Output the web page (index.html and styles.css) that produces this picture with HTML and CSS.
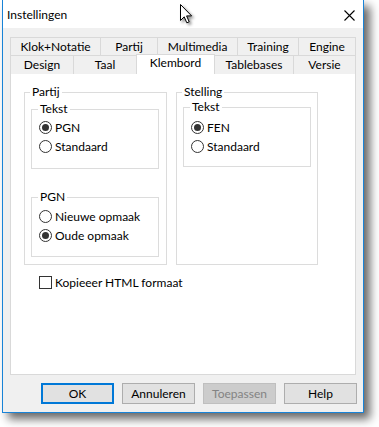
FILE: index.html
```html
<!DOCTYPE html>
<html lang="nl">
<head>
<meta charset="utf-8">
<title>Instellingen</title>
<link rel="stylesheet" href="styles.css">
</head>
<body>
<div class="window">
  <div class="titlebar">
    <span class="title">Instellingen</span>
    <svg class="close" width="11" height="11" viewBox="0 0 11 11"><path d="M0.5 0.5 L10.5 10.5 M10.5 0.5 L0.5 10.5" stroke="#000" stroke-width="1.1" fill="none"/></svg>
  </div>
  <div class="content">
    <div class="tabs">
      <div class="tabrow">
        <div class="tab w-klok">Klok+Notatie</div>
        <div class="tab w-partij">Partij</div>
        <div class="tab w-multi">Multimedia</div>
        <div class="tab w-training">Training</div>
        <div class="tab w-engine">Engine</div>
      </div>
      <div class="tabrow">
        <div class="tab w-design">Design</div>
        <div class="tab w-taal">Taal</div>
        <div class="tab w-klem active">Klembord</div>
        <div class="tab w-table">Tablebases</div>
        <div class="tab w-versie">Versie</div>
      </div>
    </div>
    <div class="panel">
      <div class="groups">
        <fieldset class="group group-partij">
          <legend>Partij</legend>
          <fieldset class="sub sub-first">
            <legend>Tekst</legend>
            <div class="option"><span class="radio checked"></span><span>PGN</span></div>
            <div class="option"><span class="radio"></span><span>Standaard</span></div>
          </fieldset>
          <fieldset class="sub sub-second">
            <legend>PGN</legend>
            <div class="option"><span class="radio"></span><span>Nieuwe opmaak</span></div>
            <div class="option"><span class="radio checked"></span><span>Oude opmaak</span></div>
          </fieldset>
        </fieldset>
        <fieldset class="group group-stelling">
          <legend>Stelling</legend>
          <fieldset class="sub sub-stelling">
            <legend>Tekst</legend>
            <div class="option"><span class="radio checked"></span><span>FEN</span></div>
            <div class="option"><span class="radio"></span><span>Standaard</span></div>
          </fieldset>
        </fieldset>
      </div>
      <div class="option check-row"><span class="checkbox"></span><span>Kopieeer HTML formaat</span></div>
    </div>
    <div class="buttons">
      <button class="btn default">OK</button>
      <button class="btn">Annuleren</button>
      <button class="btn disabled">Toepassen</button>
      <button class="btn">Help</button>
    </div>
  </div>
</div>
<svg class="cursor" width="14" height="22" viewBox="0 0 14 22"><path d="M1.5 1.5 L1.5 17.5 L5.2 13.8 L7.8 19.8 L10.2 18.8 L7.6 12.9 L12.6 12.9 Z" fill="#fff" stroke="#000" stroke-width="1" stroke-linejoin="miter"/></svg>
</body>
</html>
```

FILE: styles.css
```css
html, body {
  margin: 0;
  padding: 0;
  background: #ffffff;
}
body {
  font-family: Lato, "Noto Sans", sans-serif;
  font-size: 12px;
  color: #000;
  position: relative;
  width: 379px;
  height: 427px;
  overflow: hidden;
}
.window {
  width: 360px;
  margin-left: 2px;
  border: 1px solid #1883d7;
  border-top: none;
  background: #f0f0f0;
  box-shadow: 6px 6px 9px rgba(0, 0, 0, 0.6);
}
.titlebar {
  height: 28px;
  background: #ffffff;
  display: flex;
  align-items: center;
  justify-content: space-between;
  padding-left: 4px;
  padding-right: 8px;
}
.title {
  font-size: 12px;
  line-height: 16px;
  margin-top: 2px;
}
.close {
  display: block;
  margin-top: 2px;
}
.content {
  padding: 9px 7px 8px 7px;
}
.tabrow {
  display: flex;
  height: 18px;
}
.tab {
  box-sizing: border-box;
  height: 19px;
  border: 1px solid #d9d9d9;
  border-bottom: none;
  margin-right: -1px;
  background: #f0f0f0;
  text-align: center;
  line-height: 17px;
  white-space: nowrap;
}
.tabrow + .tabrow .tab {
  line-height: 18px;
}
.tabrow .tab:last-child {
  margin-right: 0;
}
.w-klok { width: 91px; }
.w-partij { width: 58px; }
.w-multi { width: 81px; }
.w-training { width: 62px; }
.w-engine { width: 58px; }
.w-design { width: 64px; }
.w-taal { width: 64px; }
.w-klem { width: 79px; }
.w-table { width: 80px; }
.w-versie { width: 63px; }
.tabrow + .tabrow .tab.active {
  background: #ffffff;
  height: 20px;
  margin-top: -1px;
  position: relative;
  z-index: 1;
  line-height: 16px;
}
.panel {
  box-sizing: border-box;
  height: 302px;
  background: #ffffff;
  border: 1px solid #d9d9d9;
  padding: 11px 0 0 13px;
}
.groups {
  display: flex;
  gap: 9px;
  align-items: stretch;
}
fieldset {
  margin: 0;
  border: 1px solid #dcdcdc;
  min-width: 0;
}
legend {
  padding: 0 2px;
  margin-left: -1px;
  line-height: 14px;
}
.group {
  box-sizing: border-box;
  padding: 3px 7px 7px 6px;
}
.group-partij { width: 143px; }
.group-stelling { width: 142px; padding-right: 6px; padding-top: 1px; }
.sub {
  padding: 2px 0 12px 7px;
}
.sub-second {
  margin-top: 21px;
  padding-top: 3px;
  padding-bottom: 11px;
}
.sub-stelling {
  padding-top: 4px;
  padding-bottom: 10px;
}
.option {
  display: flex;
  align-items: center;
  height: 19px;
  gap: 3px;
  white-space: nowrap;
}
.radio {
  box-sizing: border-box;
  width: 13px;
  height: 13px;
  border: 1px solid #333;
  border-radius: 50%;
  background: #fff;
  display: flex;
  align-items: center;
  justify-content: center;
  flex: none;
}
.radio.checked::after {
  content: "";
  width: 7px;
  height: 7px;
  border-radius: 50%;
  background: #333;
}
.check-row {
  margin-top: 8px;
  margin-left: 15px;
}
.checkbox {
  box-sizing: border-box;
  width: 13px;
  height: 13px;
  border: 1px solid #333;
  background: #fff;
  flex: none;
}
.buttons {
  display: flex;
  justify-content: flex-end;
  gap: 8px;
  padding-top: 8px;
  margin-right: -1px;
}
.btn {
  box-sizing: border-box;
  width: 73px;
  height: 21px;
  padding: 0;
  font-family: inherit;
  font-size: 12px;
  color: #000;
  background: #e1e1e1;
  border: 1px solid #adadad;
  border-radius: 0;
  line-height: 17px;
}
.btn.default {
  border: 2px solid #0078d7;
}
.btn.disabled {
  background: #cccccc;
  border-color: #bfbfbf;
  color: #838383;
}
.cursor {
  position: absolute;
  left: 179px;
  top: 3px;
  filter: drop-shadow(2px 2px 1.5px rgba(0, 0, 0, 0.45));
}
```
